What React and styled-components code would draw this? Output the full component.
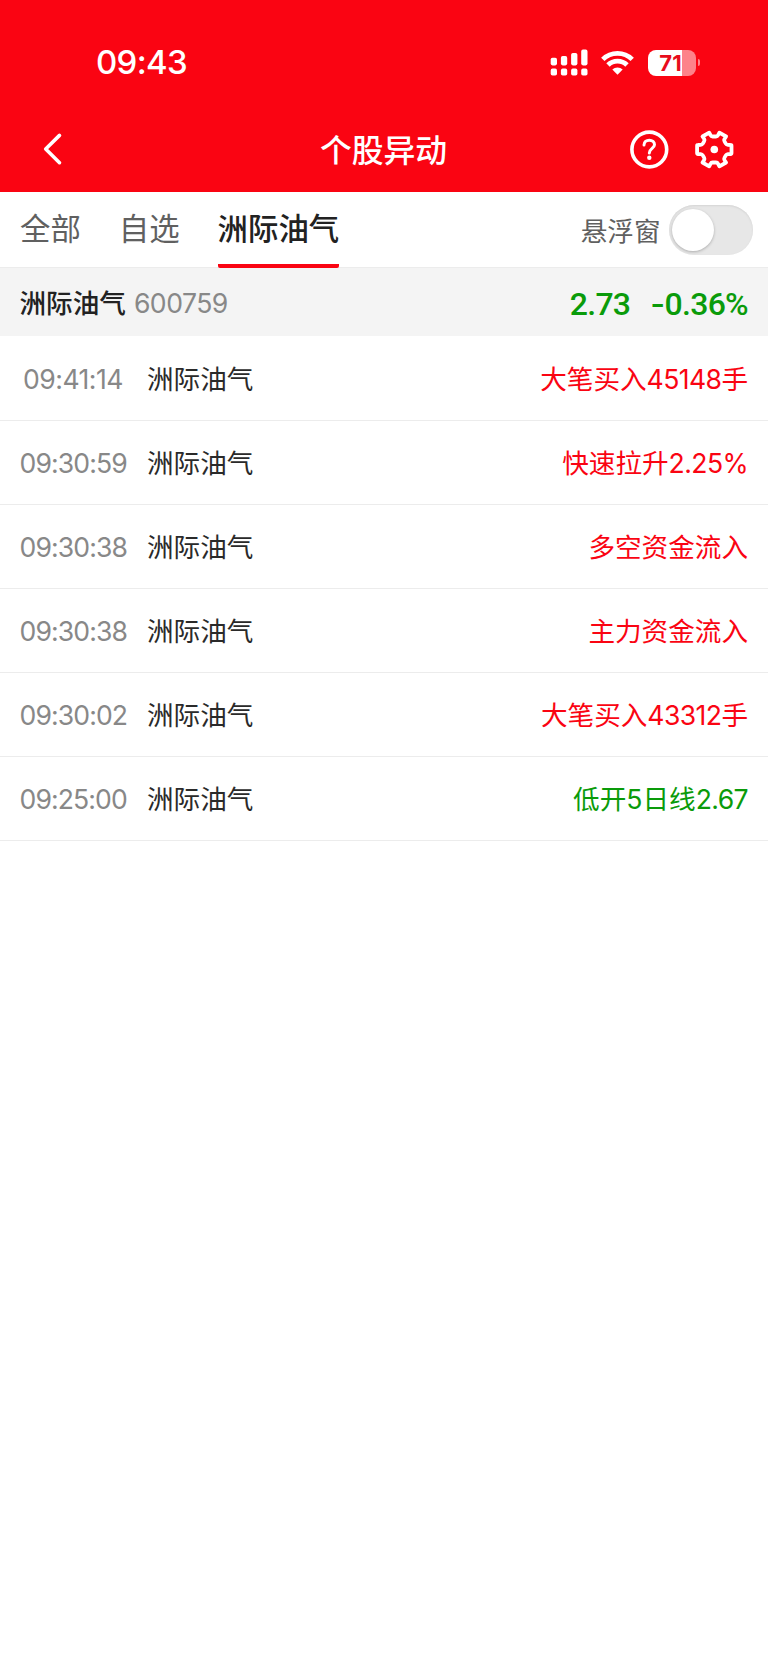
import React from 'react';
import styled, { createGlobalStyle } from 'styled-components';

const stock = { name: '洲际油气', code: '600759', price: '2.73', change: '0.36%' };

const events = [
  { time: '09:41:14', tracking: -0.5, label: '大笔买入', value: '45148', unit: '手', up: true },
  { time: '09:30:59', label: '快速拉升', value: '2.25%', up: true },
  { time: '09:30:38', label: '多空资金流入', up: true },
  { time: '09:30:38', label: '主力资金流入', up: true },
  { time: '09:30:02', label: '大笔买入', value: '43312', unit: '手', up: true },
  { time: '09:25:00', label: '低开5日线', value: '2.67', up: false },
];

const SignalIcon = () => (
  <svg width="38" height="28" viewBox="0 0 38 28" fill="#fff">
    <rect x="0.7" y="8.8" width="6.3" height="7.6" rx="1.8" />
    <rect x="10.9" y="7.1" width="6.3" height="9.3" rx="1.8" />
    <rect x="21.1" y="3.9" width="6.3" height="12.5" rx="1.8" />
    <rect x="31.2" y="0.6" width="6.3" height="15.8" rx="1.8" />
    <rect x="0.7" y="19.6" width="6.3" height="7" rx="1.8" />
    <rect x="10.9" y="19.6" width="6.3" height="7" rx="1.8" />
    <rect x="21.1" y="19.6" width="6.3" height="7" rx="1.8" />
    <rect x="31.2" y="19.6" width="6.3" height="7" rx="1.8" />
  </svg>
);

const WifiIcon = () => (
  <svg width="33" height="26" viewBox="0 0 33 26" fill="none" stroke="#fff" strokeWidth="4.8">
    <path d="M1.8 9.4 A21 21 0 0 1 31.2 9.4" />
    <path d="M7 15 A13.4 13.4 0 0 1 26 15" />
    <path d="M16.5 24.8 L11.3 19.6 A7.4 7.4 0 0 1 21.7 19.6 Z" fill="#fff" stroke="none" />
  </svg>
);

const BackIcon = () => (
  <svg width="20" height="34" viewBox="0 0 20 34" fill="none" stroke="#fff" strokeWidth="3.6" strokeLinecap="round" strokeLinejoin="round">
    <path d="M16.5 3.4 L2.7 17 L16.5 30.7" />
  </svg>
);

const HelpIcon = () => (
  <svg width="40" height="40" viewBox="0 -0.5 40 40" fill="none" stroke="#fff">
    <circle cx="20.3" cy="20" r="17.4" strokeWidth="3.6" />
    <path d="M15 15.6 C15 12.5 17.3 10.7 20.3 10.7 C23.3 10.7 25.5 12.6 25.5 15.3 C25.5 18.8 20.3 19.2 20.3 23.6" strokeWidth="3" strokeLinecap="round" />
    <circle cx="20.3" cy="28.2" r="2.2" fill="#fff" stroke="none" />
  </svg>
);

const GearIcon = () => (
  <svg width="40" height="40" viewBox="-20.3 -20.5 40 40" fill="none" stroke="#fff" strokeWidth="3.8" strokeLinejoin="round">
    <path d="M17.2 -3.6 V3.6 Q17.2 4.5 16.3 4.5 L13.6 4.6 Q12.2 4.7 11.5 5.9 L10.2 8.1 Q9.4 9.5 10.2 10.7 L11.8 13 L5.1 16.8 L3.8 14.3 Q3.1 13 1.7 13 H-1.7 Q-3.1 13 -3.8 14.3 L-5.1 16.8 L-11.8 13 L-10.2 10.7 Q-9.4 9.5 -10.2 8.1 L-11.5 5.9 Q-12.2 4.7 -13.6 4.6 L-16.3 4.5 Q-17.2 4.5 -17.2 3.6 V-3.6 Q-17.2 -4.5 -16.3 -4.5 L-13.6 -4.6 Q-12.2 -4.7 -11.5 -5.9 L-10.2 -8.1 Q-9.4 -9.5 -10.2 -10.7 L-11.8 -13 L-5.1 -16.8 L-3.8 -14.3 Q-3.1 -13 -1.7 -13 H1.7 Q3.1 -13 3.8 -14.3 L5.1 -16.8 L11.8 -13 L10.2 -10.7 Q9.4 -9.5 10.2 -8.1 L11.5 -5.9 Q12.2 -4.7 13.6 -4.6 L16.3 -4.5 Q17.2 -4.5 17.2 -3.6 Z" />
    <circle r="3.8" fill="#fff" stroke="none" />
  </svg>
);

const App = () => (
  <Page>
    <GlobalStyle />
    <Header>
      <StatusBar>
        <Clock>09:43</Clock>
        <StatusIcons>
          <SignalIcon />
          <WifiIcon />
          <Battery>
            <BatteryBody>71</BatteryBody>
            <BatteryCap />
          </Battery>
        </StatusIcons>
      </StatusBar>
      <NavBar>
        <NavSide><BackIcon /></NavSide>
        <Title>个股异动</Title>
        <NavSide $end>
          <HelpIcon />
          <GearIcon />
        </NavSide>
      </NavBar>
    </Header>
    <TabBar>
      <Tab>全部</Tab>
      <Tab>自选</Tab>
      <Tab $active>洲际油气</Tab>
      <FloatLabel>悬浮窗</FloatLabel>
      <Switch><Knob /></Switch>
    </TabBar>
    <StockBar>
      <StockName>{stock.name}</StockName>
      <StockCode>{stock.code}</StockCode>
      <Price>{stock.price}</Price>
      <Price><Minus>-</Minus>{stock.change}</Price>
    </StockBar>
    {events.map((item, index) => (
      <Row key={index}>
        <Time $tracking={item.tracking}>{item.time}</Time>
        <Name>{stock.name}</Name>
        <Event $up={item.up}>
          {item.label}
          {item.value && <Value>{item.value}</Value>}
          {item.unit}
        </Event>
      </Row>
    ))}
  </Page>
);

const GlobalStyle = createGlobalStyle`
  * {
    box-sizing: border-box;
  }
  body {
    margin: 0;
    background: #fff;
  }
`;

const Page = styled.div`
  width: 768px;
  min-height: 1670px;
  background: #fff;
  font-family: Inter, 'Noto Sans CJK SC', sans-serif;
`;

const Header = styled.header`
  height: 192px;
  background: #fa0412;
  color: #fff;
`;

const StatusBar = styled.div`
  display: flex;
  justify-content: space-between;
  height: 108px;
  padding: 43px 68px 0 96px;
`;

const Clock = styled.div`
  font-size: 33px;
  font-weight: 500;
  letter-spacing: -0.7px;
  line-height: 39px;
`;

const StatusIcons = styled.div`
  display: flex;
  align-items: center;
  height: 39px;
  gap: 13px;
`;

const Battery = styled.div`
  display: flex;
  align-items: center;
  gap: 2px;
  margin-left: 1px;
`;

const BatteryBody = styled.div`
  width: 48px;
  height: 26px;
  padding-right: 3px;
  border-radius: 8px;
  background: linear-gradient(to right, #fff 71%, #fd828a 71%);
  color: #e80c1c;
  font-size: 22px;
  font-weight: 700;
  line-height: 26px;
  text-align: center;
`;

const BatteryCap = styled.div`
  width: 2px;
  height: 7px;
  border-radius: 0 4px 4px 0;
  background: #fd828a;
`;

const NavBar = styled.div`
  display: flex;
  align-items: center;
  height: 84px;
  padding: 0 34px 0 43px;
`;

const NavSide = styled.div`
  display: flex;
  justify-content: ${props => (props.$end ? 'flex-end' : 'flex-start')};
  gap: 25px;
  width: 140px;
  padding-bottom: 2px;
`;

const Title = styled.h1`
  flex: 1;
  margin: 2px 0 0 -10px;
  font-size: 31.8px;
  font-weight: 500;
  line-height: 84px;
  text-align: center;
`;

const TabBar = styled.nav`
  display: flex;
  height: 76px;
  padding: 0 15px 0 20px;
  border-bottom: 1px solid #ececec;
`;

const Tab = styled.div`
  height: 76px;
  margin-right: 38px;
  border-bottom: 4px solid ${props => (props.$active ? '#fa0412' : 'transparent')};
  border-radius: 2px;
  color: ${props => (props.$active ? '#222' : '#606060')};
  font-size: 30.4px;
  font-weight: ${props => (props.$active ? 500 : 400)};
  line-height: 75px;
`;

const FloatLabel = styled.div`
  margin-left: auto;
  margin-right: 8.5px;
  color: #606060;
  font-size: 26.6px;
  font-weight: 400;
  line-height: 78px;
`;

const Switch = styled.div`
  width: 84px;
  height: 50px;
  margin-top: 13px;
  padding: 4px 3px;
  border-radius: 25px;
  background: #e7e7e7;
  box-shadow: inset 0 1px 2px #d4d4d4;
`;

const Knob = styled.div`
  width: 42px;
  height: 42px;
  border-radius: 50%;
  background: #fff;
  box-shadow: 0 1px 3px rgba(0, 0, 0, 0.25);
`;

const StockBar = styled.div`
  display: flex;
  align-items: center;
  height: 68px;
  margin-bottom: 1px;
  padding: 0 20px;
  background: #f4f4f4;
`;

const StockName = styled.div`
  margin: 0 0 2px -0.5px;
  color: #222;
  font-size: 26.6px;
  font-weight: 500;
`;

const StockCode = styled.div`
  flex: 1;
  margin-left: 8px;
  padding-top: 1px;
  color: #888;
  font-size: 26.6px;
  font-weight: 400;
  letter-spacing: -0.5px;
`;

const Price = styled.div`
  margin: 3px 0 0 20px;
  color: #0a9b0a;
  font-family: Roboto, sans-serif;
  font-size: 32px;
  font-weight: 500;
  letter-spacing: -0.7px;
`;

const Minus = styled.span`
  font-family: Inter, sans-serif;
  line-height: 1;
`;

const Row = styled.div`
  display: flex;
  align-items: center;
  height: 84px;
  padding: 0 20px 2px;
  border-bottom: 1px solid #ececec;
  font-size: 26.6px;
  font-weight: 400;
`;

const Time = styled.div`
  width: 107px;
  margin-left: -0.5px;
  margin-right: 20.5px;
  padding-top: 2px;
  color: #888;
  font-weight: 400;
  letter-spacing: ${props => props.$tracking || -0.9}px;
  text-align: center;
`;

const Name = styled.div`
  flex: 1;
  color: #2a2a2a;
`;

const Event = styled.div`
  color: ${props => (props.$up ? '#fa0412' : '#0a9b0a')};
`;

const Value = styled.span`
  letter-spacing: -0.6px;
`;

export default App;
